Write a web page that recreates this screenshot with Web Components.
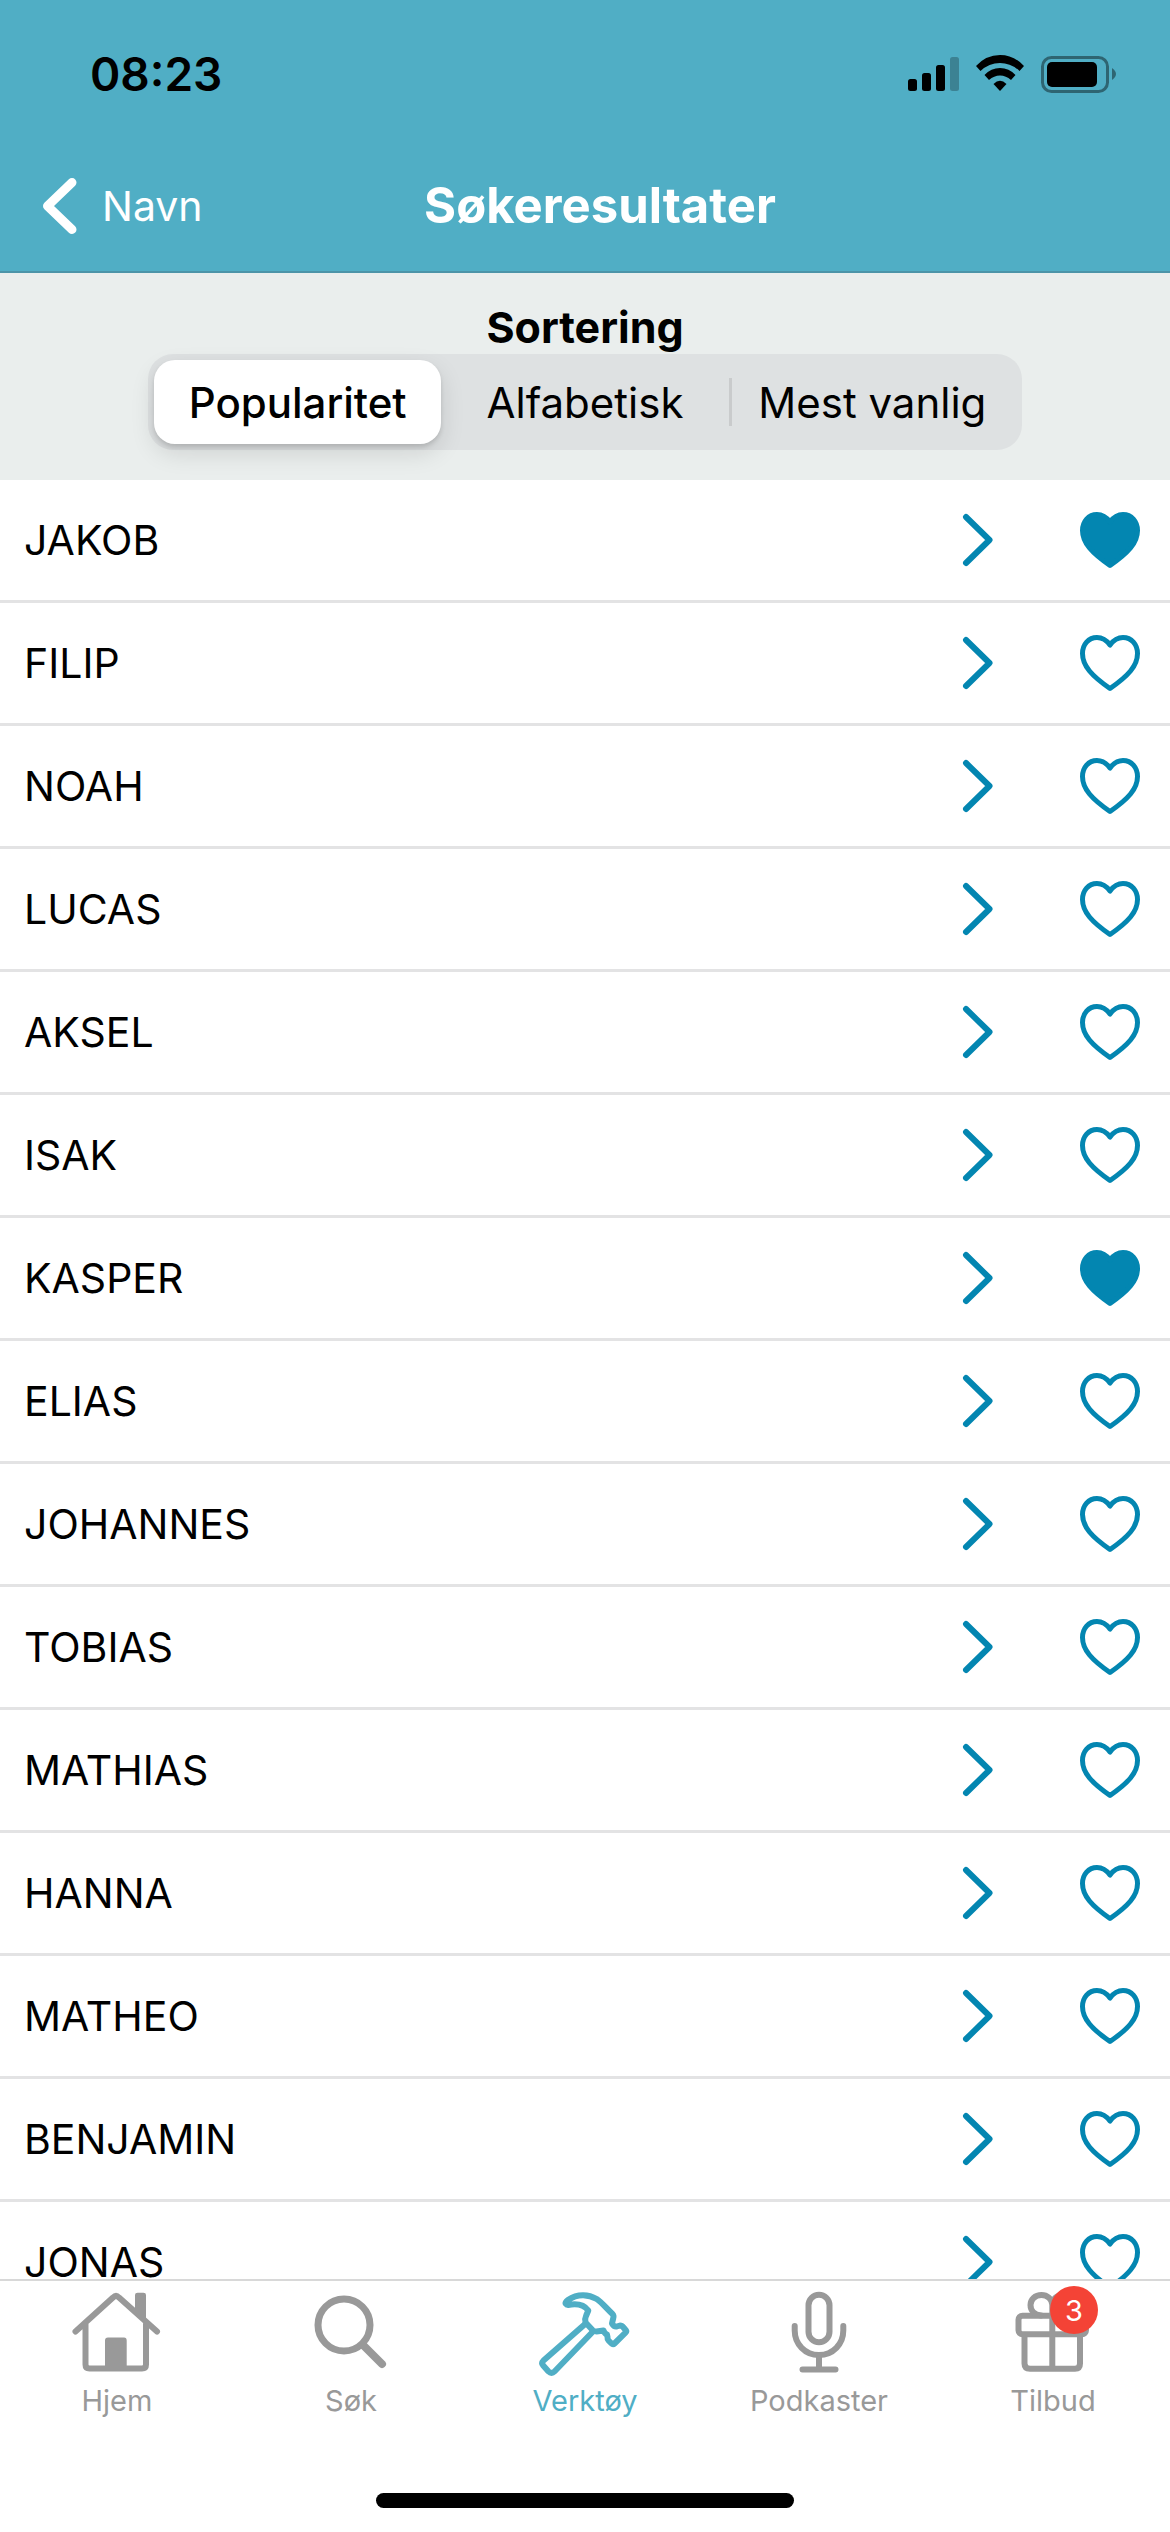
<!DOCTYPE html>
<html lang="nb">
<head>
<meta charset="utf-8">
<meta name="viewport" content="width=device-width, initial-scale=1">
<title>Søkeresultater</title>
<style>
  html, body { margin: 0; height: 100%; }
  body { font-family: Inter, "Liberation Sans", sans-serif; font-size: 41px; color: #000; background: #fff; }
</style>
</head>
<body>
<names-app></names-app>

<script>
const define = (name, html, setup) => {
  const template = document.createElement('template');
  template.innerHTML = '<style>*{box-sizing:border-box}button,input{font:inherit;color:inherit}</style>' + html;
  customElements.define(name, class extends HTMLElement {
    connectedCallback() {
      if (this.shadowRoot) return;
      this.attachShadow({ mode: 'open' }).append(template.content.cloneNode(true));
      if (setup) setup(this, this.shadowRoot);
    }
  });
};

define('status-bar', `
  <style>
    :host { display: flex; align-items: center; justify-content: space-between; height: 140px; padding: 8px 54px 0 90px; color: #000; }
    time { font-size: 46px; font-weight: 600; }
    div { display: flex; align-items: center; gap: 17px; }
    svg { display: block; }
  </style>
  <time>08:23</time>
  <div>
    <svg width="51" height="38" viewBox="0 0 51 38" role="img" aria-label="Signal">
      <rect x="0" y="24" width="9" height="12" rx="2.5"/><rect x="14" y="18" width="9" height="18" rx="2.5"/>
      <rect x="28" y="10" width="9" height="26" rx="2.5"/><rect x="42" y="2" width="9" height="34" rx="2.5" opacity=".25"/>
    </svg>
    <svg width="48" height="38" viewBox="0 0 48 38" role="img" aria-label="Wi-Fi">
      <path d="M0 11Q10 0 24 0T48 11L43.500 16Q35 8 24 8T4.500 16Z"/>
      <path d="M8.500 20Q15 13 24 13T39.500 20L35 25Q30 20.500 24 20.500T13 25Z"/>
      <path d="M17.500 29Q24 22.500 30.500 29L24 36Z"/>
    </svg>
    <svg width="75" height="38" viewBox="0 0 75 38" role="img" aria-label="Batteri">
      <rect x="1.500" y="2.500" width="65" height="34" rx="9" fill="none" stroke="#000" stroke-opacity=".42" stroke-width="3"/>
      <rect x="6" y="7" width="50" height="25" rx="5"/><path d="M71 13Q75 16 75 19T71 25Z" opacity=".42"/>
    </svg>
  </div>`);

define('nav-bar', `
  <style>
    :host { display: grid; grid-template-columns: 1fr auto 1fr; align-items: center; height: 133px; padding: 0 12px 0 42px; border-bottom: 2px solid #4c94a8; color: #fff; }
    a { display: flex; align-items: center; gap: 25px; color: inherit; text-decoration: none; }
    svg { display: block; }
    h1 { margin: 0; font-size: 49px; font-weight: 700; }
  </style>
  <a href="#navn">
    <svg width="35" height="58" viewBox="0 0 35 58" fill="none" stroke="currentColor" stroke-width="9" stroke-linecap="round" stroke-linejoin="round"><path d="M30 5.500L5.500 29L30 52.500"/></svg>
    <slot name="back"></slot>
  </a>
  <h1><slot></slot></h1>`);

define('sort-control', `
  <style>
    :host { display: block; padding: 28px 148px 30px; background: #eaeeed; font-size: 42px; }
    fieldset { margin: 0; padding: 0; border: 0; min-width: 0; }
    legend { width: 100%; padding: 0; text-align: center; font-size: 43px; font-weight: 700; line-height: 53px; }
    .track { display: grid; grid-template-columns: repeat(3, 1fr); height: 96px; padding: 6px; border-radius: 25px; background: #dee1e2; }
    label { display: flex; align-items: center; justify-content: center; border-radius: 21px; cursor: pointer; white-space: nowrap; }
    input { appearance: none; width: 0; height: 0; margin: 0; outline: 0; }
    label:has(:checked) { background: #fff; font-weight: 500; box-shadow: 0 9px 24px rgba(0,0,0,.12), 0 3px 4px rgba(0,0,0,.12); }
    label:not(:has(:checked)) + label:not(:has(:checked)) { background: linear-gradient(#c9cbcc, #c9cbcc) left center / 3px 48px no-repeat; border-radius: 0; }
  </style>
  <fieldset>
    <legend>Sortering</legend>
    <div class="track">
      <label><input type="radio" name="sort" checked>Popularitet</label>
      <label><input type="radio" name="sort">Alfabetisk</label>
      <label><input type="radio" name="sort">Mest vanlig</label>
    </div>
  </fieldset>`);

define('name-row', `
  <style>
    :host { display: flex; height: 123px; border-bottom: 3px solid #e3e3e4; --accent: #0386b1; }
    a { flex: 1; display: flex; align-items: center; justify-content: space-between; padding-left: 24px; color: inherit; text-decoration: none; }
    button { display: flex; align-items: center; margin: 0; padding: 0 29px 0 86px; border: 0; background: none; cursor: pointer; }
    svg { display: block; fill: none; stroke: var(--accent); stroke-width: 5; stroke-linecap: round; stroke-linejoin: round; }
    a svg { stroke-width: 6; }
    :host([favorite]) button svg { fill: var(--accent); }
  </style>
  <a href="#detaljer"><slot></slot>
    <svg width="31" height="54" viewBox="0 0 31 54"><path d="M4 4L27.500 27L4 50"/></svg>
  </a>
  <button type="button" aria-label="Favoritt">
    <svg width="62" height="58" viewBox="0 0 62 58"><path d="M31 11C27 5.500 23 3.500 18 3.500C9.500 3.500 3.500 10.500 3.500 19.500C3.500 32 13 42 31 54.500C49 42 58.500 32 58.500 19.500C58.500 10.500 52.500 3.500 44 3.500C39 3.500 35 5.500 31 11Z"/></svg>
  </button>`, (host, root) => {
  root.querySelector('button').onclick = () => host.toggleAttribute('favorite');
});

define('name-list', `
  <style>:host { display: block; flex: 1; min-height: 0; overflow: hidden; background: #fff; }</style>
  <slot></slot>`);

define('tab-item', `
  <style>
    :host { display: block; flex: 1; color: #999; font-size: 29px; }
    :host([active]) { color: #50aec5; }
    a { display: flex; flex-direction: column; align-items: center; color: inherit; text-decoration: none; line-height: 40px; }
    .icon { position: relative; width: 96px; height: 96px; }
    .badge { position: absolute; left: 45px; top: 1px; width: 48px; height: 48px; border-radius: 50%; background: #f44336; color: #fff; text-align: center; line-height: 50px; }
    .badge:empty { display: none; }
  </style>
  <a href="#"><div class="icon"><slot name="icon"></slot><span class="badge"></span></div><slot></slot></a>`,
  (host, root) => {
    root.querySelector('.badge').textContent = host.getAttribute('badge') || '';
  });

define('tab-bar', `
  <style>
    :host { display: block; padding: 4px 0 24px; border-top: 2px solid #d8d8d8; background: #fff; }
    nav { display: flex; }
    .home { width: 418px; height: 15px; margin: 72px auto 0; border-radius: 8px; background: #000; }
  </style>
  <nav><slot></slot></nav><div class="home"></div>`);

define('names-app', `
  <style>
    :host { display: flex; flex-direction: column; height: 100vh; }
    header { background: #50aec5; }
    svg { display: block; width: 96px; height: 96px; fill: none; stroke: currentColor; stroke-width: 6; stroke-linecap: round; stroke-linejoin: round; }
  </style>
  <header>
    <status-bar></status-bar>
    <nav-bar><span slot="back">Navn</span>Søkeresultater</nav-bar>
  </header>
  <sort-control></sort-control>
  <name-list>
    <name-row favorite>JAKOB</name-row><name-row>FILIP</name-row><name-row>NOAH</name-row>
    <name-row>LUCAS</name-row><name-row>AKSEL</name-row><name-row>ISAK</name-row>
    <name-row favorite>KASPER</name-row><name-row>ELIAS</name-row><name-row>JOHANNES</name-row>
    <name-row>TOBIAS</name-row><name-row>MATHIAS</name-row><name-row>HANNA</name-row>
    <name-row>MATHEO</name-row><name-row>BENJAMIN</name-row><name-row>JONAS</name-row>
  </name-list>
  <tab-bar>
    <tab-item>
      <svg slot="icon" viewBox="0 0 96 96"><path d="M6.500 46.500L44 12.500Q47 9.500 50 12.500L88 46.500M16.500 39V79.500Q16.500 83.500 20.500 83.500H73Q77 83.500 77 79.500V39"/><path d="M66 27V10Q66 7.700 68.500 7.700H74.500Q77 7.700 77 10V37ZM36 83V55.500Q36 52.500 39 52.500H55Q57.700 52.500 57.700 55.500V83Z" fill="currentColor" stroke="none"/></svg>
      Hjem</tab-item>
    <tab-item>
      <svg slot="icon" viewBox="0 0 96 96"><circle cx="41" cy="40" r="26" stroke-width="7"/><path d="M60.500 60.500L79 79" stroke-width="8"/></svg>
      Søk</tab-item>
    <tab-item active>
      <svg slot="icon" viewBox="0 0 96 96"><path d="M29 19Q27.500 17.500 31 15C41 8 52 9.500 59.700 14C65 17.500 70 24 75.500 29Q77 30.700 76.300 33L75 38.500Q77 42 79.700 41.500L83 40.500Q85 40.500 86.500 42.500L89 45.500Q89.700 46.500 88.500 47.700L77.500 58.500Q76 60 74.500 58.500L71.500 55.500Q70.300 54 70.500 52L70 49.500Q67.500 48.500 66.500 45.500L59.500 46.500Q57 46.500 55.500 45L48.500 37.500Q47.500 34 49 31L51.300 25.500C48 21 41 18 31 20Q29.500 20 29 19Z"/><path d="M48.700 38.500L6.500 75.500Q4 78 6.200 80.500L11.500 86.500Q14.500 89.500 17.500 86.500L56 46.500"/></svg>
      Verktøy</tab-item>
    <tab-item>
      <svg slot="icon" viewBox="0 0 96 96"><rect x="37.500" y="9.700" width="21" height="47.500" rx="10.500"/><path d="M23.700 41V45.500C23.700 59 34 70 48 70S72.300 59 72.300 45.500V41M48 70V84.500M31.500 84.500H64.500"/></svg>
      Podkaster</tab-item>
    <tab-item badge="3">
      <svg slot="icon" viewBox="0 0 96 96"><rect x="13.500" y="30.700" width="67.500" height="18.500" rx="4"/><path d="M19.500 50V78.500Q19.500 83.700 25 83.700H70Q75 83.700 75 78.500V50M47.300 31V83.500M47.300 30V20C47.300 14 42 10 36.500 10C30 10 25.500 14.500 25.500 20C25.500 26 30 30 36 30.500M47.300 20C47.300 14 52 10 58 10C64 10 69 14.500 69 20C69 26 65 30 59 30.500"/></svg>
      Tilbud</tab-item>
  </tab-bar>`);
</script>
</body>
</html>
